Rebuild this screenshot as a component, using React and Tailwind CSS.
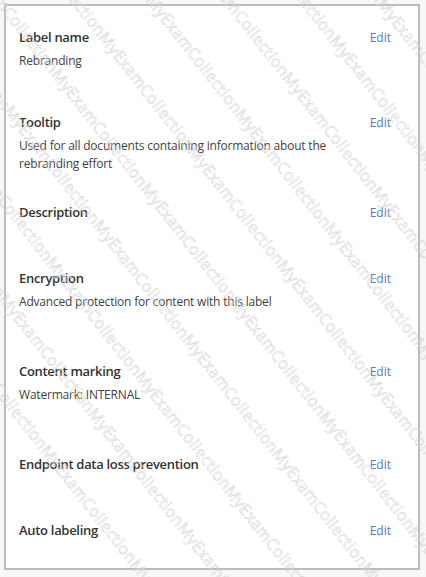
const sections = [
  { title: 'Label name', lines: ['Rebranding'], mt: 'mt-[22px]' },
  { title: 'Tooltip', lines: ['Used for all documents containing information about the', 'rebranding effort'], mt: 'mt-[43px]' },
  { title: 'Description', lines: [], mt: 'mt-[30px]' },
  { title: 'Encryption', lines: ['Advanced protection for content with this label'], mt: 'mt-[46px]' },
  { title: 'Content marking', lines: ['Watermark: INTERNAL'], mt: 'mt-[51px]' },
  { title: 'Endpoint data loss prevention', lines: [], mt: 'mt-[51px]' },
  { title: 'Auto labeling', lines: [], mt: 'mt-[46px]' },
]

// faint diagonal "MyExamCollection" watermark over the whole shot
function Watermark() {
  const rows = Array.from({ length: 16 })
  return (
    <div className="pointer-events-none absolute inset-0 overflow-hidden">
      <div className="absolute left-[-400px] top-[-300px] w-[1400px] h-[1400px] origin-center rotate-[52deg]">
        {rows.map((_, i) => (
          <div
            key={i}
            className="whitespace-nowrap text-[16px] leading-[60px] tracking-[0.5px] text-transparent [-webkit-text-stroke:0.5px_#d4d4d4]"
          >
            {'MyExamCollection'.repeat(12)}
          </div>
        ))}
      </div>
    </div>
  )
}

export default function App() {
  return (
    <div className="relative w-[426px] h-[577px] bg-[#f8f8f8] font-['Open_Sans',sans-serif] overflow-hidden">
      <div className="ml-[4px] mt-[4px] w-[416px] h-[566px] bg-white border-2 border-[#bcbcbc]">
        <div className="pl-[13px] pr-[27px]">
          {sections.map(s => (
            <div key={s.title} className={s.mt}>
              <div className="flex items-center justify-between h-5">
                <span className="text-[13px] font-semibold tracking-[-0.3px] text-[#333333]">{s.title}</span>
                <span className="text-[12px] text-[#4f7fb6]">Edit</span>
              </div>
              {s.lines.length > 0 && (
                <div className="mt-[4px]">
                  {s.lines.map(l => (
                    <div key={l} className="text-[12px] leading-[18px] tracking-[-0.2px] text-[#3f3f3f]">{l}</div>
                  ))}
                </div>
              )}
            </div>
          ))}
        </div>
      </div>
      <Watermark />
    </div>
  )
}
